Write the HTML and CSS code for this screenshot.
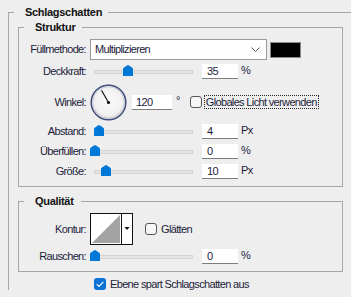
FILE: index.html
```html
<!DOCTYPE html>
<html lang="de">
<head>
    <meta charset="UTF-8">
    <title>Schlagschatten</title>
    <link rel="stylesheet" href="styles.css">
</head>
<body>
    <fieldset class="group outer">
        <legend>Schlagschatten</legend>

        <fieldset class="group box">
            <legend>Struktur</legend>
            <div class="rows">
                <div class="row row-blend">
                    <span class="lbl">Füllmethode:</span>
                    <div class="select">
                        <span>Multiplizieren</span>
                        <svg class="chevron" width="9" height="5" viewBox="0 0 9 5"><path d="M0.5 0.5 L4.5 4.5 L8.5 0.5" fill="none" stroke="#555" stroke-width="1"/></svg>
                    </div>
                    <div class="swatch"></div>
                </div>
                <div class="row">
                    <span class="lbl">Deckkraft:</span>
                    <div class="slider">
                        <div class="track"></div>
                        <svg class="thumb" style="left: 33px" width="10" height="11" viewBox="0 0 10 11"><path d="M0 4 Q0 3 1 2.4 L4 0.4 Q5 -0.2 6 0.4 L9 2.4 Q10 3 10 4 V11 H0 Z" fill="#0078d7"/></svg>
                    </div>
                    <div class="field">35</div>
                    <span class="unit">%</span>
                </div>
                <div class="row row-angle">
                    <span class="lbl">Winkel:</span>
                    <svg class="dial" width="37" height="37" viewBox="0 0 37 37">
                        <defs>
                            <radialGradient id="dialFill" cx="50%" cy="45%" r="55%">
                                <stop offset="0" stop-color="#fbfbfb"/>
                                <stop offset="0.75" stop-color="#f0f0f0"/>
                                <stop offset="1" stop-color="#d6d6dc"/>
                            </radialGradient>
                        </defs>
                        <circle cx="18.5" cy="18.5" r="17.3" fill="url(#dialFill)" stroke="#3f4d7a" stroke-width="1.5"/>
                        <circle cx="18.5" cy="18.5" r="15.8" fill="none" stroke="#c9cbd6" stroke-width="1"/>
                        <line x1="18.5" y1="18.5" x2="11.5" y2="6.4" stroke="#111" stroke-width="1.1"/>
                        <circle cx="18.5" cy="18.5" r="1.6" fill="#111"/>
                    </svg>
                    <div class="field field-wide">120</div>
                    <span class="unit deg">°</span>
                    <span class="check"></span>
                    <span class="focus">Globales Licht verwenden</span>
                </div>
                <div class="row">
                    <span class="lbl">Abstand:</span>
                    <div class="slider">
                        <div class="track"></div>
                        <svg class="thumb" style="left: 4px" width="10" height="11" viewBox="0 0 10 11"><path d="M0 4 Q0 3 1 2.4 L4 0.4 Q5 -0.2 6 0.4 L9 2.4 Q10 3 10 4 V11 H0 Z" fill="#0078d7"/></svg>
                    </div>
                    <div class="field">4</div>
                    <span class="unit">Px</span>
                </div>
                <div class="row">
                    <span class="lbl">Überfüllen:</span>
                    <div class="slider">
                        <div class="track"></div>
                        <svg class="thumb" style="left: 0px" width="10" height="11" viewBox="0 0 10 11"><path d="M0 4 Q0 3 1 2.4 L4 0.4 Q5 -0.2 6 0.4 L9 2.4 Q10 3 10 4 V11 H0 Z" fill="#0078d7"/></svg>
                    </div>
                    <div class="field">0</div>
                    <span class="unit">%</span>
                </div>
                <div class="row">
                    <span class="lbl">Größe:</span>
                    <div class="slider">
                        <div class="track"></div>
                        <svg class="thumb" style="left: 11px" width="10" height="11" viewBox="0 0 10 11"><path d="M0 4 Q0 3 1 2.4 L4 0.4 Q5 -0.2 6 0.4 L9 2.4 Q10 3 10 4 V11 H0 Z" fill="#0078d7"/></svg>
                    </div>
                    <div class="field">10</div>
                    <span class="unit">Px</span>
                </div>
            </div>
        </fieldset>

        <fieldset class="group box quality">
            <legend>Qualität</legend>
            <div class="rows">
                <div class="row row-contour">
                    <span class="lbl">Kontur:</span>
                    <svg class="contour" width="43" height="32" viewBox="0 0 43 32">
                        <rect x="0.5" y="0.5" width="42" height="31" fill="#fff" stroke="#111"/>
                        <polygon points="2,30 30,2 30,30" fill="#a3a3a3"/>
                        <line x1="31.5" y1="0.5" x2="31.5" y2="31.5" stroke="#111"/>
                        <polygon points="34.5,14 39.5,14 37,17" fill="#111"/>
                    </svg>
                    <span class="check check-smooth"></span>
                    <span class="text">Glätten</span>
                </div>
                <div class="row">
                    <span class="lbl">Rauschen:</span>
                    <div class="slider">
                        <div class="track"></div>
                        <svg class="thumb" style="left: 0px" width="10" height="11" viewBox="0 0 10 11"><path d="M0 4 Q0 3 1 2.4 L4 0.4 Q5 -0.2 6 0.4 L9 2.4 Q10 3 10 4 V11 H0 Z" fill="#0078d7"/></svg>
                    </div>
                    <div class="field">0</div>
                    <span class="unit">%</span>
                </div>
            </div>
        </fieldset>

        <div class="knockout">
            <span class="check checked">
                <svg width="12" height="12" viewBox="0 0 12 12"><path d="M2.8 6.2 L5 8.4 L9.4 3.8" fill="none" stroke="#fff" stroke-width="1.1"/></svg>
            </span>
            <span class="text">Ebene spart Schlagschatten aus</span>
        </div>
    </fieldset>
</body>
</html>
```

FILE: styles.css
```css
body {
    margin: 0;
    background-color: #eeeeee;
    font-family: "Liberation Sans", Arial, sans-serif;
    font-size: 11px;
    letter-spacing: -0.65px;
    color: #1c1c3a;
    overflow: hidden;
    height: 297px;
}

.group {
    border: 1px solid #a6a6a6;
    margin: 0;
    min-width: 0;
}

.group legend {
    font-weight: bold;
    line-height: 15px;
    letter-spacing: -0.3px;
    color: #111;
}

.outer {
    margin: 5px 0 0 8px;
    padding: 0 0 0 5px;
    border-right: none;
    border-bottom: none;
}

.outer > legend {
    padding: 0 6px 0 11px;
}

.box {
    box-sizing: border-box;
    width: 325px;
    margin-left: 4px;
    padding: 4px 0 7px 5px;
}

.box > legend {
    padding: 0 7px 0 11px;
}

.quality {
    margin-top: 7px;
}

.rows {
    display: flex;
    flex-direction: column;
    gap: 5px;
}

.row {
    display: flex;
    align-items: center;
    height: 15px;
    line-height: 13px;
}

.row-blend {
    height: 21px;
    margin-bottom: -1px;
}

.row-angle {
    height: 36px;
    margin-bottom: -1px;
}

.row-contour {
    height: 32px;
    margin-bottom: -1px;
}

.lbl {
    width: 62px;
    margin-right: 4px;
    text-align: right;
    flex: none;
}

.select {
    box-sizing: border-box;
    width: 177px;
    height: 21px;
    background: #fff;
    border: 1px solid #9a9a9a;
    display: flex;
    align-items: center;
    justify-content: space-between;
    padding: 0 6px 0 4px;
}

.chevron {
    display: block;
}

.swatch {
    box-sizing: border-box;
    width: 31px;
    height: 16px;
    margin-left: 3px;
    background: #000;
    border: 1px solid #8a8a8a;
}

.slider {
    position: relative;
    width: 103px;
    height: 15px;
    flex: none;
}

.track {
    box-sizing: border-box;
    width: 99px;
    height: 4px;
    margin: 6px 0 0 4px;
    background: #e4e4e4;
    border: 1px solid #d4d4d4;
}

.thumb {
    position: absolute;
    top: 1px;
    display: block;
}

.field {
    box-sizing: border-box;
    width: 36px;
    height: 15px;
    margin-left: 9px;
    padding: 1px 0 0 5px;
    background: #fff;
    border-bottom: 1px solid #7e7e7e;
    line-height: 13px;
}

.field-wide {
    width: 40px;
    margin-left: 5px;
    padding-left: 4px;
}

.unit {
    align-self: flex-start;
    margin-left: 3px;
    line-height: 12px;
}

.deg {
    margin-left: 4px;
    margin-top: 10px;
}

.dial {
    display: block;
    flex: none;
}

.check {
    box-sizing: border-box;
    width: 12px;
    height: 12px;
    margin-left: 10px;
    border: 1px solid #555;
    border-radius: 3px;
    background: #f6f6f6;
    flex: none;
}

.focus {
    margin-left: 2px;
    padding: 0 1px;
    border: 1px dotted #222;
    line-height: 12px;
}

.contour {
    display: block;
    flex: none;
}

.check-smooth {
    margin-left: 12px;
}

.text {
    margin-left: 4px;
}

.knockout {
    display: flex;
    align-items: center;
    height: 12px;
    margin-top: 6px;
    padding-left: 80px;
}

.checked {
    margin-left: 0;
    border: none;
    background: #0a72d4;
}

.checked svg {
    display: block;
}
```
